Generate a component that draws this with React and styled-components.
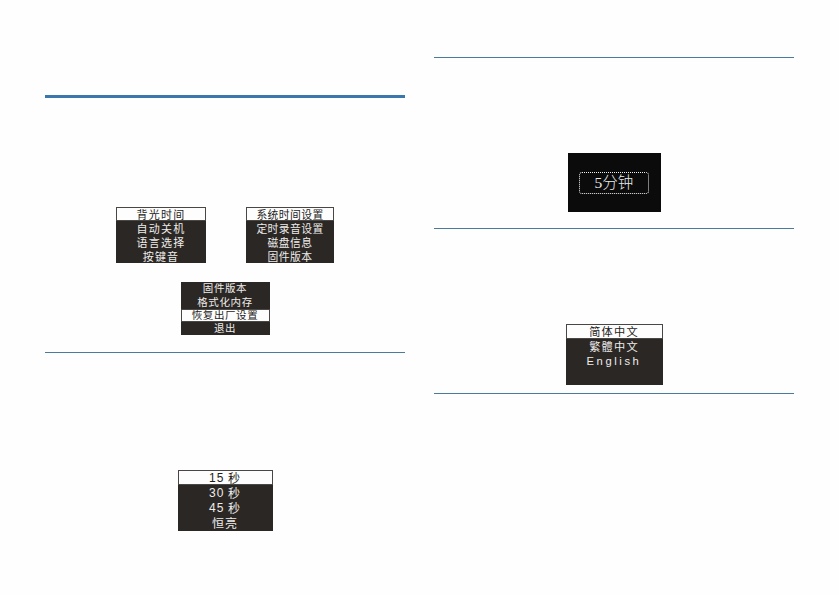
import React from "react";
import styled, { createGlobalStyle } from "styled-components";

const Global = createGlobalStyle`
  html, body { margin: 0; padding: 0; background: #fefefe; }
  body { width: 839px; height: 595px; overflow: hidden; font-family: "Noto Sans CJK SC", "Noto Sans", sans-serif; }
`;

const Page = styled.div`
  display: flex;
  gap: 29px;
  padding-left: 45px;
  width: 839px;
  height: 595px;
  box-sizing: border-box;
`;

const Column = styled.div`
  width: 360px;
  display: flex;
  flex-direction: column;
  align-items: center;
  padding-top: ${(p) => p.$top}px;
`;

const Rule = styled.div`
  align-self: stretch;
  height: ${(p) => (p.$thick ? 3 : 1)}px;
  background: ${(p) => (p.$thick ? "#3a77ad" : "#4a7b9d")};
  margin-top: ${(p) => p.$mt || 0}px;
`;

const ScreenRow = styled.div`
  display: flex;
  justify-content: center;
  gap: 40px;
  margin-top: ${(p) => p.$mt || 0}px;
`;

const Screen = styled.div`
  width: ${(p) => p.$w}px;
  height: ${(p) => p.$h}px;
  background: #2b2724;
  display: flex;
  flex-direction: column;
  box-sizing: border-box;
  margin-top: ${(p) => p.$mt || 0}px;
`;

const Item = styled.div`
  height: ${(p) => p.$h}px;
  flex: none;
  display: flex;
  align-items: center;
  justify-content: center;
  box-sizing: border-box;
  font-size: ${(p) => p.$fs || 10.5}px;
  letter-spacing: ${(p) => p.$ls ?? 0.5}px;
  line-height: 1;
  white-space: nowrap;
  color: ${(p) => (p.$sel ? "#1e1c1b" : "#eeecea")};
  background: ${(p) => (p.$sel ? "#fdfdfd" : "transparent")};
  border: ${(p) => (p.$sel ? "1px solid #4a4643" : "none")};
`;

const Latin = styled.span`
  font-family: "Liberation Sans", "Noto Sans CJK SC", sans-serif;
  letter-spacing: ${(p) => p.$ls ?? 0.5}px;
`;

const DarkScreen = styled.div`
  width: 93px;
  height: 59px;
  background: #0b0b0b;
  display: flex;
  align-items: center;
  justify-content: center;
  margin-top: ${(p) => p.$mt || 0}px;
`;

const TimeBox = styled.div`
  width: 70px;
  height: 22px;
  box-sizing: border-box;
  border: 1.5px dotted #f2f2f2;
  border-radius: 3px;
  display: flex;
  align-items: center;
  justify-content: center;
  color: #ececec;
  font-family: "Liberation Serif", "Noto Sans CJK SC", serif;
  font-size: 15.5px;
  font-weight: 300;
  line-height: 1;
`;

const Menu = ({ w, h, rh, items, sel, fs, ls, mt }) => (
  <Screen $w={w} $h={h} $mt={mt}>
    {items.map((t, i) => (
      <Item key={i} $h={rh} $sel={i === sel} $fs={fs} $ls={ls}>
        {t}
      </Item>
    ))}
  </Screen>
);

export default function App() {
  return (
    <>
      <Global />
      <Page>
        <Column $top={95}>
          <Rule $thick />
          <ScreenRow $mt={109}>
            <Menu w={90} h={56} rh={14} sel={0} fs={11} items={["背光时间", "自动关机", "语言选择", "按键音"]} ls={1.2} />
            <Menu w={88} h={56} rh={14} sel={0} fs={10.8} items={["系统时间设置", "定时录音设置", "磁盘信息", "固件版本"]} ls={0.4} />
          </ScreenRow>
          <Menu
            w={89}
            h={53}
            rh={13.25}
            sel={2}
            mt={19}
            fs={10.5}
            ls={0.6}
            items={["固件版本", "格式化内存", "恢复出厂设置", "退出"]}
          />
          <Rule $mt={17} />
          <Menu
            w={95}
            h={61}
            rh={15.25}
            sel={0}
            mt={117}
            fs={12}
            ls={1}
            items={[
              <><Latin $ls={1}>15</Latin>&nbsp;秒</>,
              <><Latin $ls={1}>30</Latin>&nbsp;秒</>,
              <><Latin $ls={1}>45</Latin>&nbsp;秒</>,
              "恒亮",
            ]}
          />
        </Column>
        <Column $top={57}>
          <Rule />
          <DarkScreen $mt={95}>
            <TimeBox>5分钟</TimeBox>
          </DarkScreen>
          <Rule $mt={16} />
          <Menu
            w={97}
            h={61}
            rh={15}
            sel={0}
            mt={95}
            fs={11.2}
            ls={1.2}
            items={["简体中文", "繁體中文", <Latin $ls={2.6}>English</Latin>]}
          />
          <Rule $mt={8} />
        </Column>
      </Page>
    </>
  );
}
